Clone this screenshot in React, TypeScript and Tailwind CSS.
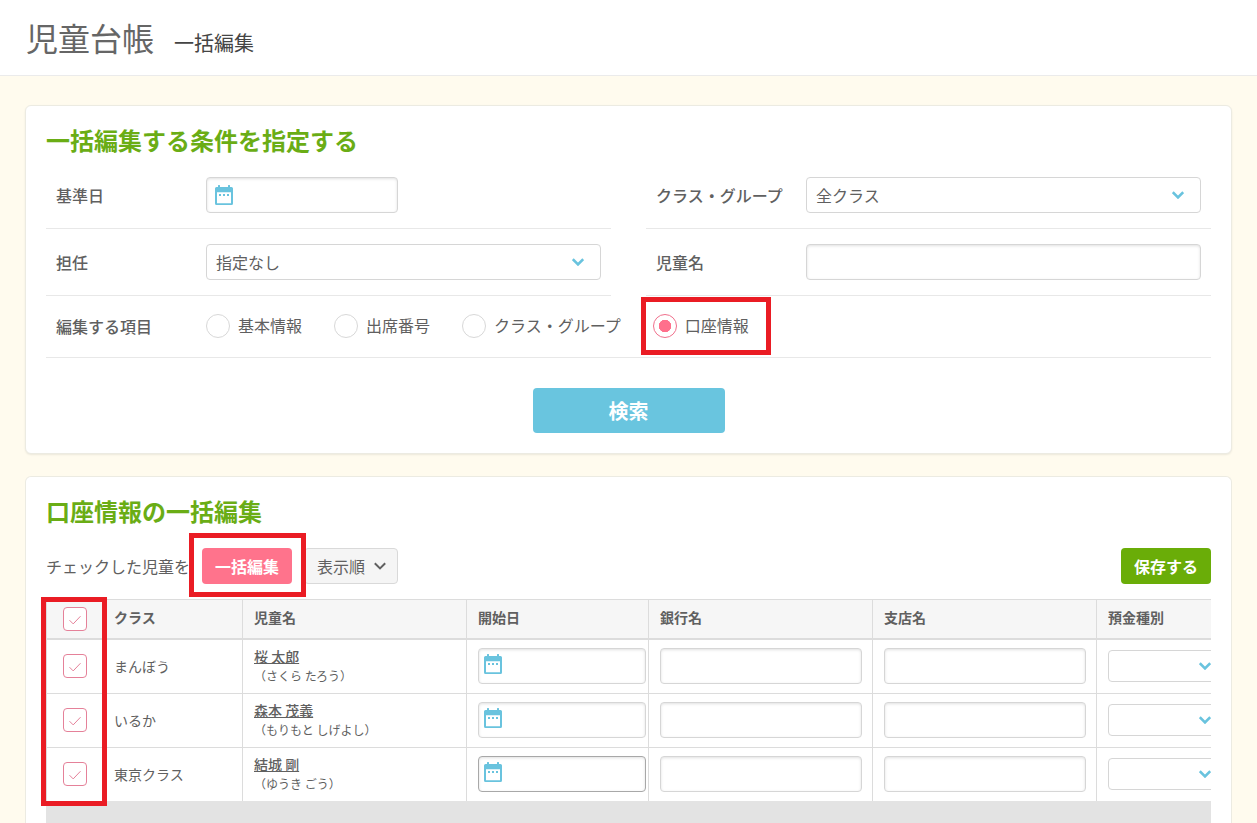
import { useState } from "react";
import type { ReactNode } from "react";

const textBox =
  "h-9 rounded-[4px] border bg-white px-2.5 text-base text-[#606060] shadow-[inset_0_1px_3px_rgba(0,0,0,0.12)] outline-none";

function CalendarIcon() {
  return (
    <svg width="18" height="20" viewBox="0 0 18 20" fill="#69c3de" aria-hidden="true">
      <path
        fillRule="evenodd"
        d="M3 .5a.5.5 0 0 1 .5-.5h1a.5.5 0 0 1 .5.5V2h8V.5a.5.5 0 0 1 .5-.5h1a.5.5 0 0 1 .5.5V2h1.5A1.500 1.500 0 0 1 18 3.500V18.500A1.500 1.500 0 0 1 16.500 20h-15A1.500 1.500 0 0 1 0 18.500V3.500A1.500 1.500 0 0 1 1.500 2H3ZM2 7.300v11h14v-11Z"
      />
      <path d="M4 9h2v2H4ZM8 9h2v2H8ZM12 9h2v2h-2Z" />
    </svg>
  );
}

function Chevron({ color, stroke }: { color: string; stroke: number }) {
  return (
    <svg width="12" height="8" viewBox="0 0 12 8" fill="none" aria-hidden="true">
      <path d="M.8 1.200 6 6.400l5.200-5.200" stroke={color} strokeWidth={stroke} />
    </svg>
  );
}

function DateBox({ id, label, table, active }: { id?: string; label: string; table?: boolean; active?: boolean }) {
  return (
    <span className={table ? "grid w-[168px]" : "grid w-48"}>
      <input
        id={id}
        type="text"
        aria-label={label}
        className={`${textBox} col-start-1 row-start-1 w-full pl-9 ${active ? "border-[#a8a8a8]" : "border-[#d6d6d6]"}`}
      />
      <span
        className={`pointer-events-none col-start-1 row-start-1 self-start justify-self-start ${
          table ? "mt-1.5 ml-1.5" : "mt-2 ml-[9px]"
        }`}
      >
        <CalendarIcon />
      </span>
    </span>
  );
}

function SelectBox({ id, label, options, table }: { id?: string; label: string; options: string[]; table?: boolean }) {
  return (
    <span className={table ? "grid w-[120px]" : "grid w-full"}>
      <select
        id={id}
        aria-label={label}
        className={`col-start-1 row-start-1 w-full appearance-none rounded-[4px] border border-[#d6d6d6] bg-white pr-10 pl-[9px] text-base text-[#606060] outline-none ${
          table ? "h-8" : "h-9"
        }`}
      >
        {options.map((o) => (
          <option key={o}>{o}</option>
        ))}
      </select>
      <span className="pointer-events-none col-start-1 row-start-1 mr-[17px] self-center justify-self-end">
        <Chevron color="#69c3de" stroke={2.6} />
      </span>
    </span>
  );
}

function Field({ id, label, children }: { id: string; label: string; children: ReactNode }) {
  return (
    <div className="flex items-center border-b border-[#e8e8e8] px-2.5 py-[15px]">
      <label htmlFor={id} className="w-[150px] shrink-0 font-medium">
        {label}
      </label>
      <div className="flex min-w-0 flex-1">{children}</div>
    </div>
  );
}

function Check({ label, checked, onChange }: { label: string; checked: boolean; onChange: () => void }) {
  return (
    <label className="mx-auto grid size-6">
      <input
        type="checkbox"
        aria-label={label}
        checked={checked}
        onChange={onChange}
        className="col-start-1 row-start-1 size-6 appearance-none rounded-[4px] border border-[#e58199] bg-white"
      />
      {checked && (
        <svg
          viewBox="0 0 24 24"
          fill="none"
          className="pointer-events-none col-start-1 row-start-1 size-6"
          aria-hidden="true"
        >
          <path d="m6.500 13.200 3.700 3.700 7.300-7.700" stroke="#e58199" strokeWidth="1" />
        </svg>
      )}
    </label>
  );
}

const items = ["基本情報", "出席番号", "クラス・グループ", "口座情報"];

const children = [
  { group: "まんぼう", name: "桜 太郎", kana: "（さくら たろう）" },
  { group: "いるか", name: "森本 茂義", kana: "（もりもと しげよし）" },
  { group: "東京クラス", name: "結城 剛", kana: "（ゆうき ごう）" },
];

const th = "border-t border-b-2 border-l border-[#dcdcdc] pb-1 pl-[11px] text-left font-bold";
const td = "border-l border-[#dcdcdc] pb-px pl-[11px]";
const mark = "pointer-events-none absolute border-[5px] border-[#ea1c24]";

export default function App() {
  const [item, setItem] = useState("口座情報");
  const [checked, setChecked] = useState([true, true, true]);
  const all = checked.every(Boolean);

  return (
    <div className="flex min-h-screen flex-col bg-[#fffbee] font-['Noto_Sans_CJK_JP',sans-serif] text-base leading-6 text-[#606060]">
      <header className="flex items-baseline gap-5 border-b border-[#ebebeb] bg-white px-[26px] pt-[13px] pb-3.5">
        <h1 className="text-[32px] leading-[48px] text-[#666]">児童台帳</h1>
        <p className="text-xl text-[#444]">一括編集</p>
      </header>

      <main className="flex flex-1 flex-col gap-[22px] px-[25px] pt-[29px]">
        <section className="rounded-md border border-[#ecebe2] bg-white px-5 pt-3.5 pb-5 shadow-[0_1px_2px_rgba(0,0,0,0.08)]">
          <h2 className="mb-0.5 text-2xl leading-10 font-bold text-[#6aad15]">一括編集する条件を指定する</h2>
          <form onSubmit={(e) => e.preventDefault()}>
            <div className="grid grid-cols-2 gap-x-[35px]">
              <Field id="base-date" label="基準日">
                <DateBox id="base-date" label="基準日" />
              </Field>
              <Field id="group" label="クラス・グループ">
                <SelectBox id="group" label="クラス・グループ" options={["全クラス"]} />
              </Field>
              <Field id="teacher" label="担任">
                <SelectBox id="teacher" label="担任" options={["指定なし"]} />
              </Field>
              <Field id="child-name" label="児童名">
                <input id="child-name" type="text" className={`${textBox} w-full border-[#d6d6d6]`} />
              </Field>
            </div>
            <div
              role="radiogroup"
              aria-labelledby="item-label"
              className="flex items-center border-b border-[#e8e8e8] px-2.5 pt-[18px] pb-[19px]"
            >
              <span id="item-label" className="w-[150px] shrink-0 font-medium">
                編集する項目
              </span>
              <div className="flex gap-8">
                {items.map((name) => (
                  <label key={name} className="relative flex h-6 items-center gap-2">
                    <input
                      type="radio"
                      name="item"
                      checked={item === name}
                      onChange={() => setItem(name)}
                      className="size-6 appearance-none rounded-full border border-[#d8d8d8] bg-white checked:border-[#f0708c] checked:bg-[radial-gradient(circle,#ff708c_6px,#fff_6.500px)]"
                    />
                    <span className="pb-0.5">{name}</span>
                    {name === "口座情報" && <span className={`${mark} -inset-y-[17px] -right-[22px] -left-3`} />}
                  </label>
                ))}
              </div>
            </div>
            <div className="flex justify-center pt-[30px]">
              <button type="submit" className="h-[45px] w-48 rounded-[4px] bg-[#69c5df] text-xl font-bold text-white">
                検索
              </button>
            </div>
          </form>
        </section>

        <section className="flex flex-1 flex-col rounded-t-md border border-b-0 border-[#ecebe2] bg-white px-5 pt-3.5">
          <h2 className="mb-0.5 text-2xl leading-10 font-bold text-[#6aad15]">口座情報の一括編集</h2>
          <div className="flex items-center gap-3 py-[15px]">
            <span>チェックした児童を</span>
            <span className="relative flex">
              <button type="button" className="h-9 rounded-[4px] bg-[#ff738c] px-[13px] font-bold text-white">
                一括編集
              </button>
              <span className={`${mark} -top-[15px] -right-3.5 -bottom-[13px] -left-[13px] z-10`} />
            </span>
            <button
              type="button"
              className="flex h-9 items-center gap-[9px] rounded-[4px] border border-[#d9d9d9] bg-[#f5f5f5] pr-[11px] pl-3"
            >
              表示順
              <Chevron color="#606060" stroke={2} />
            </button>
            <button type="button" className="ml-auto h-9 rounded-[4px] bg-[#6aad08] px-[13px] font-bold text-white">
              保存する
            </button>
          </div>

          <div className="relative">
            <div className="overflow-hidden">
              <table className="w-[1194px] table-fixed border-separate border-spacing-0 text-sm">
                <colgroup>
                  <col className="w-14" />
                  <col className="w-[140px]" />
                  <col className="w-56" />
                  <col className="w-[182px]" />
                  <col className="w-56" />
                  <col className="w-56" />
                  <col className="w-36" />
                </colgroup>
                <thead>
                  <tr className="h-[41px] bg-[#f6f6f6]">
                    <th className="border-t border-b-2 border-l border-[#dcdcdc]">
                      <Check
                        label="すべて選択"
                        checked={all}
                        onChange={() => setChecked(checked.map(() => !all))}
                      />
                    </th>
                    <th className={th}>クラス</th>
                    <th className={th}>児童名</th>
                    <th className={th}>開始日</th>
                    <th className={th}>銀行名</th>
                    <th className={th}>支店名</th>
                    <th className={th}>預金種別</th>
                  </tr>
                </thead>
                <tbody>
                  {children.map((c, i) => (
                    <tr key={c.name} className="h-[54px] last:h-[53px] [&:not(:last-child)>td]:border-b">
                      <td className="border-l border-[#dcdcdc] pb-px">
                        <Check
                          label={c.name}
                          checked={checked[i]}
                          onChange={() => setChecked(checked.map((v, j) => (j === i ? !v : v)))}
                        />
                      </td>
                      <td className={td}>{c.group}</td>
                      <td className={`${td} leading-5`}>
                        <a href="#" className="block font-medium underline">
                          {c.name}
                        </a>
                        <span className="block text-xs leading-5">{c.kana}</span>
                      </td>
                      <td className={td}>
                        <DateBox label="開始日" table active={i === 2} />
                      </td>
                      <td className={td}>
                        <input type="text" aria-label="銀行名" className={`${textBox} block w-[202px] border-[#d6d6d6]`} />
                      </td>
                      <td className={td}>
                        <input type="text" aria-label="支店名" className={`${textBox} block w-[202px] border-[#d6d6d6]`} />
                      </td>
                      <td className={td}>
                        <SelectBox label="預金種別" options={[""]} table />
                      </td>
                    </tr>
                  ))}
                </tbody>
              </table>
            </div>
            <span className={`${mark} -top-0.5 -bottom-[5px] -left-[5px] w-[66px]`} />
          </div>
          <div className="min-h-5 flex-1 bg-[#e3e3e3]" />
        </section>
      </main>
    </div>
  );
}
